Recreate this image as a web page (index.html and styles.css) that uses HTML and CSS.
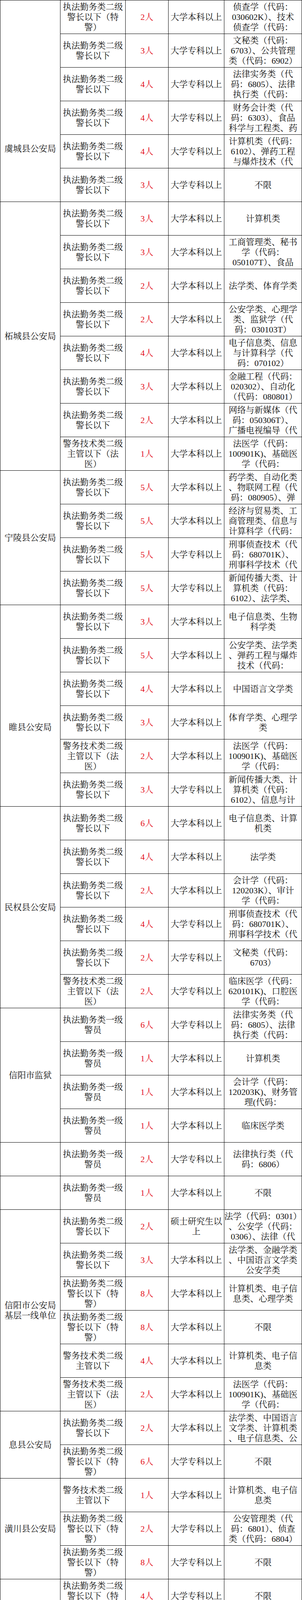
FILE: index.html
```html
<!DOCTYPE html>
<html lang="zh-CN">
<head>
<meta charset="utf-8">
<title>招录职位表</title>
<link rel="stylesheet" href="styles.css">
</head>
<body>
<div class="sheet">
<div class="c unit s6 yu"><span>虞城县公安局</span></div>
<div class="c"><span>执法勤务类二级<br>警长以下（特<br>警）</span></div><div class="c num"><span>2人</span></div><div class="c"><span>大学本科以上</span></div><div class="c"><span>侦查学（代码：<br>030602K）、技术<br>侦查学（代码：</span></div>
<div class="c"><span>执法勤务类二级<br>警长以下</span></div><div class="c num"><span>3人</span></div><div class="c"><span>大学专科以上</span></div><div class="c"><span>文秘类（代码：<br>6703）、公共管理<br>类（代码：6902）</span></div>
<div class="c"><span>执法勤务类二级<br>警长以下</span></div><div class="c num"><span>4人</span></div><div class="c"><span>大学专科以上</span></div><div class="c"><span>法律实务类（代<br>码：6805）、法律<br>执行类（代码：</span></div>
<div class="c"><span>执法勤务类二级<br>警长以下</span></div><div class="c num"><span>4人</span></div><div class="c"><span>大学专科以上</span></div><div class="c"><span>财务会计类（代<br>码：6303）、食品<br>科学与工程类、药</span></div>
<div class="c"><span>执法勤务类二级<br>警长以下</span></div><div class="c num"><span>4人</span></div><div class="c"><span>大学专科以上</span></div><div class="c"><span>计算机类（代码：<br>6102）、弹药工程<br>与爆炸技术（代</span></div>
<div class="c"><span>执法勤务类二级<br>警长以下</span></div><div class="c num"><span>3人</span></div><div class="c"><span>大学专科以上</span></div><div class="c"><span>不限</span></div>

<div class="c unit s8"><span>柘城县公安局</span></div>
<div class="c"><span>执法勤务类二级<br>警长以下</span></div><div class="c num"><span>3人</span></div><div class="c"><span>大学本科以上</span></div><div class="c"><span>计算机类</span></div>
<div class="c"><span>执法勤务类二级<br>警长以下</span></div><div class="c num"><span>3人</span></div><div class="c"><span>大学本科以上</span></div><div class="c"><span>工商管理类、秘书<br>学（代码：<br>050107T）、食品</span></div>
<div class="c"><span>执法勤务类二级<br>警长以下</span></div><div class="c num"><span>2人</span></div><div class="c"><span>大学本科以上</span></div><div class="c"><span>法学类、体育学类</span></div>
<div class="c"><span>执法勤务类二级<br>警长以下</span></div><div class="c num"><span>2人</span></div><div class="c"><span>大学本科以上</span></div><div class="c"><span>公安学类、心理学<br>类、监狱学（代<br>码：030103T）</span></div>
<div class="c"><span>执法勤务类二级<br>警长以下</span></div><div class="c num"><span>4人</span></div><div class="c"><span>大学本科以上</span></div><div class="c"><span>电子信息类、信息<br>与计算科学（代<br>码：070102）</span></div>
<div class="c"><span>执法勤务类二级<br>警长以下</span></div><div class="c num"><span>3人</span></div><div class="c"><span>大学本科以上</span></div><div class="c"><span>金融工程（代码：<br>020302）、自动化<br>（代码：080801）</span></div>
<div class="c"><span>执法勤务类二级<br>警长以下</span></div><div class="c num"><span>2人</span></div><div class="c"><span>大学本科以上</span></div><div class="c"><span>网络与新媒体（代<br>码：050306T）、<br>广播电视编导（代</span></div>
<div class="c"><span>警务技术类二级<br>主管以下（法<br>医）</span></div><div class="c num"><span>1人</span></div><div class="c"><span>大学本科以上</span></div><div class="c"><span>法医学（代码：<br>100901K)、基础医<br>学（代码：</span></div>

<div class="c unit s4"><span>宁陵县公安局</span></div>
<div class="c"><span>执法勤务类二级<br>警长以下</span></div><div class="c num"><span>5人</span></div><div class="c"><span>大学本科以上</span></div><div class="c"><span>药学类、自动化类<br>、物联网工程（代<br>码：080905）、弹</span></div>
<div class="c"><span>执法勤务类二级<br>警长以下</span></div><div class="c num"><span>5人</span></div><div class="c"><span>大学本科以上</span></div><div class="c"><span>经济与贸易类、工<br>商管理类、信息与<br>计算科学（代码：</span></div>
<div class="c"><span>执法勤务类二级<br>警长以下</span></div><div class="c num"><span>5人</span></div><div class="c"><span>大学专科以上</span></div><div class="c"><span>刑事侦查技术（代<br>码：680701K）、<br>刑事科学技术（代</span></div>
<div class="c"><span>执法勤务类二级<br>警长以下</span></div><div class="c num"><span>5人</span></div><div class="c"><span>大学专科以上</span></div><div class="c"><span>新闻传播大类、计<br>算机类（代码：<br>6102）、法学类、</span></div>

<div class="c unit s6 sui"><span>睢县公安局</span></div>
<div class="c"><span>执法勤务类二级<br>警长以下</span></div><div class="c num"><span>3人</span></div><div class="c"><span>大学本科以上</span></div><div class="c"><span>电子信息类、生物<br>科学类</span></div>
<div class="c"><span>执法勤务类二级<br>警长以下</span></div><div class="c num"><span>5人</span></div><div class="c"><span>大学本科以上</span></div><div class="c"><span>公安学类、法学类<br>、弹药工程与爆炸<br>技术（代码：</span></div>
<div class="c"><span>执法勤务类二级<br>警长以下</span></div><div class="c num"><span>4人</span></div><div class="c"><span>大学本科以上</span></div><div class="c"><span>中国语言文学类</span></div>
<div class="c"><span>执法勤务类二级<br>警长以下</span></div><div class="c num"><span>3人</span></div><div class="c"><span>大学本科以上</span></div><div class="c"><span>体育学类、心理学<br>类</span></div>
<div class="c"><span>警务技术类二级<br>主管以下（法<br>医）</span></div><div class="c num"><span>2人</span></div><div class="c"><span>大学本科以上</span></div><div class="c"><span>法医学（代码：<br>100901K)、基础医<br>学（代码：</span></div>
<div class="c"><span>执法勤务类二级<br>警长以下</span></div><div class="c num"><span>3人</span></div><div class="c"><span>大学专科以上</span></div><div class="c"><span>新闻传播大类、计<br>算机类（代码：<br>6102）、信息与计</span></div>

<div class="c unit s6"><span>民权县公安局</span></div>
<div class="c"><span>执法勤务类二级<br>警长以下</span></div><div class="c num"><span>6人</span></div><div class="c"><span>大学本科以上</span></div><div class="c"><span>电子信息类、计算<br>机类</span></div>
<div class="c"><span>执法勤务类二级<br>警长以下</span></div><div class="c num"><span>4人</span></div><div class="c"><span>大学本科以上</span></div><div class="c"><span>法学类</span></div>
<div class="c"><span>执法勤务类二级<br>警长以下</span></div><div class="c num"><span>2人</span></div><div class="c"><span>大学本科以上</span></div><div class="c"><span>会计学（代码：<br>120203K）、审计<br>学（代码：</span></div>
<div class="c"><span>执法勤务类二级<br>警长以下</span></div><div class="c num"><span>4人</span></div><div class="c"><span>大学专科以上</span></div><div class="c"><span>刑事侦查技术（代<br>码：680701K）、<br>刑事科学技术（代</span></div>
<div class="c"><span>执法勤务类二级<br>警长以下</span></div><div class="c num"><span>2人</span></div><div class="c"><span>大学专科以上</span></div><div class="c"><span>文秘类（代码：<br>6703）</span></div>
<div class="c"><span>警务技术类二级<br>主管以下（法<br>医）</span></div><div class="c num"><span>2人</span></div><div class="c"><span>大学专科以上</span></div><div class="c"><span>临床医学（代码：<br>620101K)、口腔医<br>学（代码：</span></div>

<div class="c unit s4"><span>信阳市监狱</span></div>
<div class="c"><span>执法勤务类一级<br>警员</span></div><div class="c num"><span>6人</span></div><div class="c"><span>大学专科以上</span></div><div class="c"><span>法律实务类（代<br>码：6805）、法律<br>执行类（代码：</span></div>
<div class="c"><span>执法勤务类一级<br>警员</span></div><div class="c num"><span>1人</span></div><div class="c"><span>大学本科以上</span></div><div class="c"><span>计算机类</span></div>
<div class="c"><span>执法勤务类一级<br>警员</span></div><div class="c num"><span>1人</span></div><div class="c"><span>大学本科以上</span></div><div class="c"><span>会计学（代码：<br>120203K)、财务管<br>理(代码：</span></div>
<div class="c"><span>执法勤务类一级<br>警员</span></div><div class="c num"><span>1人</span></div><div class="c"><span>大学本科以上</span></div><div class="c"><span>临床医学类</span></div>

<div class="c unit"></div>
<div class="c"><span>执法勤务类一级<br>警员</span></div><div class="c num"><span>2人</span></div><div class="c"><span>大学专科以上</span></div><div class="c"><span>法律执行类（代<br>码：6806）</span></div>

<div class="c unit"></div>
<div class="c"><span>执法勤务类一级<br>警员</span></div><div class="c num"><span>1人</span></div><div class="c"><span>大学本科以上</span></div><div class="c"><span>不限</span></div>

<div class="c unit s6"><span>信阳市公安局<br>基层一线单位</span></div>
<div class="c"><span>执法勤务类二级<br>警长以下</span></div><div class="c num"><span>2人</span></div><div class="c"><span>硕士研究生以<br>上</span></div><div class="c"><span>法学（代码：0301）<br>、公安学（代码：<br>0306）、法律（代</span></div>
<div class="c"><span>执法勤务类二级<br>警长以下</span></div><div class="c num"><span>3人</span></div><div class="c"><span>大学本科以上</span></div><div class="c"><span>法学类、金融学类<br>、中国语言文学类<br>公安学类</span></div>
<div class="c"><span>执法勤务类二级<br>警长以下（特<br>警）</span></div><div class="c num"><span>8人</span></div><div class="c"><span>大学本科以上</span></div><div class="c"><span>计算机类、电子信<br>息类、心理学类</span></div>
<div class="c"><span>执法勤务类二级<br>警长以下（特<br>警）</span></div><div class="c num"><span>8人</span></div><div class="c"><span>大学本科以上</span></div><div class="c"><span>不限</span></div>
<div class="c"><span>警务技术类二级<br>主管以下</span></div><div class="c num"><span>4人</span></div><div class="c"><span>大学本科以上</span></div><div class="c"><span>计算机类、电子信<br>息类</span></div>
<div class="c"><span>警务技术类二级<br>主管以下（法<br>医）</span></div><div class="c num"><span>2人</span></div><div class="c"><span>大学本科以上</span></div><div class="c"><span>法医学（代码：<br>100901K)、基础医<br>学（代码：</span></div>

<div class="c unit s2"><span>息县公安局</span></div>
<div class="c"><span>执法勤务类二级<br>警长以下</span></div><div class="c num"><span>2人</span></div><div class="c"><span>大学本科以上</span></div><div class="c"><span>法学类、中国语言<br>文学类、计算机类<br>、电子信息类、公</span></div>
<div class="c"><span>执法勤务类二级<br>警长以下（特<br>警）</span></div><div class="c num"><span>6人</span></div><div class="c"><span>大学专科以上</span></div><div class="c"><span>不限</span></div>

<div class="c unit s3"><span>潢川县公安局</span></div>
<div class="c"><span>警务技术类二级<br>主管以下</span></div><div class="c num"><span>1人</span></div><div class="c"><span>大学本科以上</span></div><div class="c"><span>计算机类、电子信<br>息类</span></div>
<div class="c"><span>执法勤务类二级<br>警长以下（特<br>警）</span></div><div class="c num"><span>2人</span></div><div class="c"><span>大学专科以上</span></div><div class="c"><span>公安管理类（代<br>码：6801）、侦查<br>类（代码：6804）</span></div>
<div class="c"><span>执法勤务类二级<br>警长以下（特<br>警）</span></div><div class="c num"><span>8人</span></div><div class="c"><span>大学专科以上</span></div><div class="c"><span>不限</span></div>

<div class="c unit s2"><span>光山县公安局</span></div>
<div class="c"><span>执法勤务类二级<br>警长以下（特<br>警）</span></div><div class="c num"><span>4人</span></div><div class="c"><span>大学专科以上</span></div><div class="c"><span>不限</span></div>
<div class="c"><span>警务技术类二级<br>主管以下（法<br>医）</span></div><div class="c num"><span>1人</span></div><div class="c"><span>大学专科以上</span></div><div class="c"><span>临床医学（代码：<br>620101K)、口腔医<br>学（代码：</span></div>

<div class="c unit s3"><span>新县公安局</span></div>
<div class="c"><span>执法勤务类二级<br>警长以下</span></div><div class="c num"><span>1人</span></div><div class="c"><span>大学本科以上</span></div><div class="c"><span>公安学类、法学类</span></div>
<div class="c"><span>执法勤务类二级<br>警长以下</span></div><div class="c num"><span>2人</span></div><div class="c"><span>大学本科以上</span></div><div class="c"><span>计算机类、电子信<br>息类</span></div>
<div class="c"><span>执法勤务类二级<br>警长以下（特<br>警）</span></div><div class="c num"><span>2人</span></div><div class="c"><span>大学专科以上</span></div><div class="c"><span>不限</span></div>

<div class="c unit s3"><span>商城县公安局</span></div>
<div class="c"><span>执法勤务类二级<br>警长以下</span></div><div class="c num"><span>2人</span></div><div class="c"><span>大学本科以上</span></div><div class="c"><span>公安学类、法学类</span></div>
<div class="c"><span>执法勤务类二级<br>警长以下</span></div><div class="c num"><span>2人</span></div><div class="c"><span>大学本科以上</span></div><div class="c"><span>体育学类、教育学<br>类、计算机类、电<br>子信息类</span></div>
<div class="c"><span>执法勤务类二级<br>警长以下（特<br>警）</span></div><div class="c num"><span>3人</span></div><div class="c"><span>大学专科以上</span></div><div class="c"><span>公安管理类（代<br>码：6801）、侦查<br>类（代码：6804）</span></div>

<div class="c unit s2"><span>淮滨县公安局</span></div>
<div class="c"><span>执法勤务类二级<br>警长以下</span></div><div class="c num"><span>1人</span></div><div class="c"><span>大学本科以上</span></div><div class="c"><span>法学类、心理学类<br>、公共管理类、计<br>算机类</span></div>
<div class="c"><span>执法勤务类二级<br>警长以下（特<br>警）</span></div><div class="c num"><span>1人</span></div><div class="c"><span>大学专科以上</span></div><div class="c"><span>不限</span></div>

<div class="c unit"></div>
<div class="c"><span>执法勤务类一级<br>警员</span></div><div class="c num"><span>2人</span></div><div class="c"><span>大学本科以上</span></div><div class="c"><span>法学类、公安学类</span></div>

<div class="c unit s5"><span>周口市公安局<br>基层一线单位</span></div>
<div class="c"><span>执法勤务类二级<br>警长以下</span></div><div class="c num"><span>2人</span></div><div class="c"><span>大学本科以上</span></div><div class="c"><span>中国语言文学类、<br>新闻传播学类</span></div>
<div class="c"><span>执法勤务类二级<br>警长以下</span></div><div class="c num"><span>3人</span></div><div class="c"><span>大学本科以上</span></div><div class="c"><span>法学类、工商管理<br>类</span></div>
<div class="c"><span>执法勤务类二级<br>警长以下</span></div><div class="c num"><span>3人</span></div><div class="c"><span>大学本科以上</span></div><div class="c"><span>计算机类、电子信<br>息类、管理科学与<br>工程类</span></div>
<div class="c"><span>执法勤务类二级<br>警长以下</span></div><div class="c num"><span>2人</span></div><div class="c"><span>大学本科以上</span></div><div class="c"><span>体育学类、公安学<br>类、土木类、机械<br>类</span></div>
<div class="c"><span>执法勤务类二级<br>警长以下</span></div><div class="c num"><span>2人</span></div><div class="c"><span>大学本科以上</span></div><div class="c"><span>金融学（代码：<br>020301k)</span></div>

<div class="c unit s6"><span>周口市淮阳区<br>公安局</span></div>
<div class="c"><span>执法勤务类二级<br>警长以下</span></div><div class="c num"><span>2人</span></div><div class="c"><span>大学本科以上</span></div><div class="c"><span>法学类</span></div>
<div class="c"><span>执法勤务类二级<br>警长以下</span></div><div class="c num"><span>1人</span></div><div class="c"><span>大学本科以上</span></div><div class="c"><span>计算机类</span></div>
<div class="c"><span>执法勤务类二级<br>警长以下</span></div><div class="c num"><span>1人</span></div><div class="c"><span>大学本科以上</span></div><div class="c"><span>不限</span></div>
<div class="c"><span>执法勤务类二级<br>警长以下</span></div><div class="c num"><span>1人</span></div><div class="c"><span>大学本科以上</span></div><div class="c"><span>新闻传播学类</span></div>
<div class="c"><span>执法勤务类二级<br>警长以下</span></div><div class="c num"><span>2人</span></div><div class="c"><span>大学本科以上</span></div><div class="c"><span>中国语言文学类</span></div>
<div class="c"><span>执法勤务类二级<br>警长以下</span></div><div class="c num"><span>1人</span></div><div class="c"><span>大学专科以上</span></div><div class="c"><span>食品工业类（代<br>码：5901）、药品<br>制造类（代码：</span></div>

<div class="c unit s5"><span>项城市公安局</span></div>
<div class="c"><span>执法勤务类二级<br>警长以下</span></div><div class="c num"><span>2人</span></div><div class="c"><span>大学本科以上</span></div><div class="c"><span>法学类、公安学类</span></div>
<div class="c"><span>执法勤务类二级<br>警长以下</span></div><div class="c num"><span>2人</span></div><div class="c"><span>大学本科以上</span></div><div class="c"><span>中国语言文学类、<br>新闻传播学类</span></div>
<div class="c"><span>执法勤务类二级<br>警长以下</span></div><div class="c num"><span>2人</span></div><div class="c"><span>大学专科以上</span></div><div class="c"><span>食品药品管理类<br>（代码：5903）、<br>食品科学与工程类</span></div>
<div class="c"><span>执法勤务类二级<br>警长以下</span></div><div class="c num"><span>2人</span></div><div class="c"><span>大学专科以上</span></div><div class="c"><span>电子信息类（代<br>码：6101）、计算<br>机类（代码：</span></div>
<div class="c"><span>执法勤务类二级<br>警长以下</span></div><div class="c num"><span>2人</span></div><div class="c"><span>大学专科以上</span></div><div class="c"><span>不限</span></div>

<div class="c unit s6"><span>扶沟县公安局</span></div>
<div class="c"><span>执法勤务类二级<br>警长以下</span></div><div class="c num"><span>2人</span></div><div class="c"><span>大学本科以上</span></div><div class="c"><span>电子信息类、公共<br>管理类</span></div>
<div class="c"><span>执法勤务类二级<br>警长以下</span></div><div class="c num"><span>2人</span></div><div class="c"><span>大学专科以上</span></div><div class="c"><span>计算机类（代码：<br>6102）</span></div>
<div class="c"><span>执法勤务类二级<br>警长以下</span></div><div class="c num"><span>3人</span></div><div class="c"><span>大学专科以上</span></div><div class="c"><span>法学类、法律实务<br>类（代码：6805）<br>、工商管理类（代</span></div>
<div class="c"><span>执法勤务类二级<br>警长以下</span></div><div class="c num"><span>3人</span></div><div class="c"><span>大学专科以上</span></div><div class="c"><span>不限</span></div>
<div class="c"><span>执法勤务类二级<br>警长以下</span></div><div class="c num"><span>3人</span></div><div class="c"><span>大学专科以上</span></div><div class="c"><span>公安学类、公安管<br>理类（代码：<br>6801）、公安技术</span></div>
<div class="c"><span>警务技术类二级<br>主管以下（法<br>医）</span></div><div class="c num"><span>1人</span></div><div class="c"><span>大学专科以上</span></div><div class="c"><span>临床医学（代码：<br>620101K)、口腔医<br>学（代码：</span></div>
</div>
</body>
</html>
```

FILE: styles.css
```css
html, body {
  margin: 0;
  padding: 0;
  background: #fff;
}

.sheet {
  display: grid;
  grid-template-columns: 153px 166px 109px 142px 198px;
  grid-auto-rows: 85px;
  gap: 1px;
  padding: 1px;
  width: 774px;
  box-sizing: border-box;
  background: #000;
  font-family: "Liberation Serif", "Noto Serif CJK SC", "Noto Sans CJK SC", serif;
  font-size: 22px;
  line-height: 26px;
  color: #111;
}

.c {
  background: #fff;
  display: flex;
  align-items: center;
  justify-content: center;
  text-align: center;
  overflow: hidden;
  min-height: 0;
  box-sizing: border-box;
}

.c > span {
  display: block;
  white-space: nowrap;
}

.unit { grid-column: 1; }
.s2 { grid-row: span 2; }
.s3 { grid-row: span 3; }
.s4 { grid-row: span 4; }
.s5 { grid-row: span 5; }
.s6 { grid-row: span 6; }
.s8 { grid-row: span 8; }

.yu { padding-top: 245px; }
.sui { padding-top: 111px; }

.num { color: #e3101a; }
```
